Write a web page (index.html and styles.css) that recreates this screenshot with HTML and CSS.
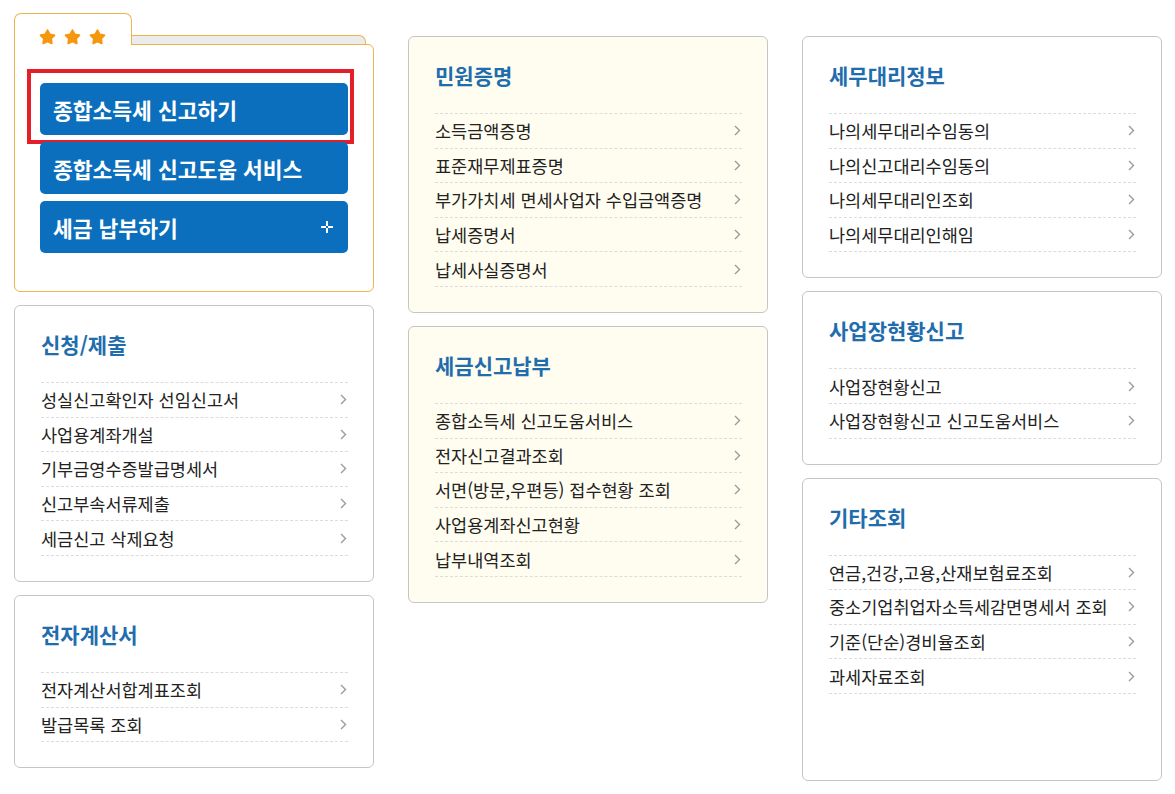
FILE: index.html
```html
<!DOCTYPE html>
<html lang="ko">
<head>
    <meta charset="UTF-8">
    <meta name="viewport" content="width=device-width, initial-scale=1.0">
    <title>종합소득세 - 메뉴</title>
    <link rel="stylesheet" href="styles.css">
</head>
<body>
    <div class="menu-board">
        <!-- 1열 -->
        <div class="col">
            <div class="fav">
                <div class="fav-head">
                    <div class="fav-tab">
                        <svg class="star" viewBox="0 0 15 15"><polygon points="7.5,1.2 9.44,4.83 13.49,5.55 10.64,8.52 11.2,12.6 7.5,10.8 3.8,12.6 4.36,8.52 1.51,5.55 5.56,4.83"/></svg>
                        <svg class="star" viewBox="0 0 15 15"><polygon points="7.5,1.2 9.44,4.83 13.49,5.55 10.64,8.52 11.2,12.6 7.5,10.8 3.8,12.6 4.36,8.52 1.51,5.55 5.56,4.83"/></svg>
                        <svg class="star" viewBox="0 0 15 15"><polygon points="7.5,1.2 9.44,4.83 13.49,5.55 10.64,8.52 11.2,12.6 7.5,10.8 3.8,12.6 4.36,8.52 1.51,5.55 5.56,4.83"/></svg>
                    </div>
                    <div class="fav-strip"></div>
                </div>
                <div class="fav-body">
                    <a href="#" class="big-btn">종합소득세 신고하기<span class="marker"></span></a>
                    <a href="#" class="big-btn">종합소득세 신고도움 서비스</a>
                    <a href="#" class="big-btn">세금 납부하기
                        <svg class="plus" viewBox="0 0 12 12"><path d="M6 0v5M6 7v5M0 6h5M7 6h5"/></svg>
                    </a>
                </div>
            </div>

            <div class="card">
                <h3 class="card-title">신청/제출</h3>
                <ul class="menu">
                    <li><a href="#">성실신고확인자 선임신고서<svg class="arr" viewBox="0 0 7 11"><path d="M1 1l4.5 4.5L1 10"/></svg></a></li>
                    <li><a href="#">사업용계좌개설<svg class="arr" viewBox="0 0 7 11"><path d="M1 1l4.5 4.5L1 10"/></svg></a></li>
                    <li><a href="#">기부금영수증발급명세서<svg class="arr" viewBox="0 0 7 11"><path d="M1 1l4.5 4.5L1 10"/></svg></a></li>
                    <li><a href="#">신고부속서류제출<svg class="arr" viewBox="0 0 7 11"><path d="M1 1l4.5 4.5L1 10"/></svg></a></li>
                    <li><a href="#">세금신고 삭제요청<svg class="arr" viewBox="0 0 7 11"><path d="M1 1l4.5 4.5L1 10"/></svg></a></li>
                </ul>
            </div>

            <div class="card">
                <h3 class="card-title">전자계산서</h3>
                <ul class="menu">
                    <li><a href="#">전자계산서합계표조회<svg class="arr" viewBox="0 0 7 11"><path d="M1 1l4.5 4.5L1 10"/></svg></a></li>
                    <li><a href="#">발급목록 조회<svg class="arr" viewBox="0 0 7 11"><path d="M1 1l4.5 4.5L1 10"/></svg></a></li>
                </ul>
            </div>
        </div>

        <!-- 2열 -->
        <div class="col col-low">
            <div class="card card-cream">
                <h3 class="card-title">민원증명</h3>
                <ul class="menu">
                    <li><a href="#">소득금액증명<svg class="arr" viewBox="0 0 7 11"><path d="M1 1l4.5 4.5L1 10"/></svg></a></li>
                    <li><a href="#">표준재무제표증명<svg class="arr" viewBox="0 0 7 11"><path d="M1 1l4.5 4.5L1 10"/></svg></a></li>
                    <li><a href="#">부가가치세 면세사업자 수입금액증명<svg class="arr" viewBox="0 0 7 11"><path d="M1 1l4.5 4.5L1 10"/></svg></a></li>
                    <li><a href="#">납세증명서<svg class="arr" viewBox="0 0 7 11"><path d="M1 1l4.5 4.5L1 10"/></svg></a></li>
                    <li><a href="#">납세사실증명서<svg class="arr" viewBox="0 0 7 11"><path d="M1 1l4.5 4.5L1 10"/></svg></a></li>
                </ul>
            </div>

            <div class="card card-cream">
                <h3 class="card-title">세금신고납부</h3>
                <ul class="menu">
                    <li><a href="#">종합소득세 신고도움서비스<svg class="arr" viewBox="0 0 7 11"><path d="M1 1l4.5 4.5L1 10"/></svg></a></li>
                    <li><a href="#">전자신고결과조회<svg class="arr" viewBox="0 0 7 11"><path d="M1 1l4.5 4.5L1 10"/></svg></a></li>
                    <li><a href="#">서면(방문,우편등) 접수현황 조회<svg class="arr" viewBox="0 0 7 11"><path d="M1 1l4.5 4.5L1 10"/></svg></a></li>
                    <li><a href="#">사업용계좌신고현황<svg class="arr" viewBox="0 0 7 11"><path d="M1 1l4.5 4.5L1 10"/></svg></a></li>
                    <li><a href="#">납부내역조회<svg class="arr" viewBox="0 0 7 11"><path d="M1 1l4.5 4.5L1 10"/></svg></a></li>
                </ul>
            </div>
        </div>

        <!-- 3열 -->
        <div class="col col-low">
            <div class="card">
                <h3 class="card-title">세무대리정보</h3>
                <ul class="menu">
                    <li><a href="#">나의세무대리수임동의<svg class="arr" viewBox="0 0 7 11"><path d="M1 1l4.5 4.5L1 10"/></svg></a></li>
                    <li><a href="#">나의신고대리수임동의<svg class="arr" viewBox="0 0 7 11"><path d="M1 1l4.5 4.5L1 10"/></svg></a></li>
                    <li><a href="#">나의세무대리인조회<svg class="arr" viewBox="0 0 7 11"><path d="M1 1l4.5 4.5L1 10"/></svg></a></li>
                    <li><a href="#">나의세무대리인해임<svg class="arr" viewBox="0 0 7 11"><path d="M1 1l4.5 4.5L1 10"/></svg></a></li>
                </ul>
            </div>

            <div class="card">
                <h3 class="card-title">사업장현황신고</h3>
                <ul class="menu">
                    <li><a href="#">사업장현황신고<svg class="arr" viewBox="0 0 7 11"><path d="M1 1l4.5 4.5L1 10"/></svg></a></li>
                    <li><a href="#">사업장현황신고 신고도움서비스<svg class="arr" viewBox="0 0 7 11"><path d="M1 1l4.5 4.5L1 10"/></svg></a></li>
                </ul>
            </div>

            <div class="card card-tall">
                <h3 class="card-title">기타조회</h3>
                <ul class="menu">
                    <li><a href="#">연금,건강,고용,산재보험료조회<svg class="arr" viewBox="0 0 7 11"><path d="M1 1l4.5 4.5L1 10"/></svg></a></li>
                    <li><a href="#">중소기업취업자소득세감면명세서 조회<svg class="arr" viewBox="0 0 7 11"><path d="M1 1l4.5 4.5L1 10"/></svg></a></li>
                    <li><a href="#">기준(단순)경비율조회<svg class="arr" viewBox="0 0 7 11"><path d="M1 1l4.5 4.5L1 10"/></svg></a></li>
                    <li><a href="#">과세자료조회<svg class="arr" viewBox="0 0 7 11"><path d="M1 1l4.5 4.5L1 10"/></svg></a></li>
                </ul>
            </div>
        </div>
    </div>
</body>
</html>
```

FILE: styles.css
```css
/* 종합소득세 메뉴 보드 */
body {
    margin: 0;
    padding: 0;
    background-color: #ffffff;
    font-family: "Noto Sans CJK KR", "Liberation Sans", sans-serif;
    color: #222;
}

a {
    text-decoration: none;
}

.menu-board {
    display: flex;
    align-items: flex-start;
    gap: 34px;
    padding: 13px 0 0 14px;
}

.col {
    width: 360px;
    display: flex;
    flex-direction: column;
    gap: 13px;
}

.col-low {
    margin-top: 23px;
}

/* 즐겨찾기 폴더 */
.fav-head {
    display: flex;
    align-items: flex-end;
}

.fav-tab {
    position: relative;
    z-index: 1;
    width: 118px;
    height: 32px;
    margin-bottom: -1px;
    box-sizing: border-box;
    padding: 15px 0 0 24px;
    display: flex;
    gap: 8px;
    background-color: #fff;
    border: 1px solid #eeb44c;
    border-bottom: 0;
    border-radius: 7px 7px 0 0;
}

.star {
    width: 17px;
    height: 17px;
    overflow: visible;
    fill: #f5980f;
    stroke: #f5980f;
    stroke-width: 1.8;
    stroke-linejoin: round;
}

.fav-strip {
    flex: 1;
    height: 9px;
    box-sizing: border-box;
    margin-right: 8px;
    background-color: #ececec;
    border: 1px solid #eeb44c;
    border-bottom: 0;
    border-left: 0;
    border-radius: 0 7px 0 0;
}

.fav-body {
    border: 1px solid #eeb44c;
    border-radius: 0 6px 6px 6px;
    padding: 38px 25px 38px 25px;
    display: flex;
    flex-direction: column;
    gap: 7px;
}

.big-btn {
    position: relative;
    display: flex;
    align-items: center;
    justify-content: space-between;
    height: 52px;
    padding: 0 15px 0 13px;
    border-radius: 5px;
    background-color: #0b6fbd;
    color: #fff;
    font-size: 21.5px;
    font-weight: bold;
}

.marker {
    position: absolute;
    top: -14px;
    left: -13px;
    right: -6px;
    bottom: -9px;
    border: 4px solid #e3202a;
    pointer-events: none;
}

.plus {
    width: 12px;
    height: 12px;
    stroke: #fff;
    stroke-width: 2;
    fill: none;
}

/* 메뉴 카드 */
.card {
    border: 1px solid #c5c5c5;
    border-radius: 6px;
    padding: 24px 25px 25px 26px;
    background-color: #fff;
}

.card-cream {
    background-color: #fffdf0;
}

.card-tall {
    box-sizing: border-box;
    min-height: 303px;
}

.card-title {
    margin: 0 0 24px;
    font-size: 21px;
    line-height: 28px;
    font-weight: bold;
    color: #1f6dad;
}

.menu {
    list-style: none;
    margin: 0;
    padding: 0;
    border-top: 1px dashed #dcdcdc;
}

.menu li {
    border-bottom: 1px dashed #dcdcdc;
}

.menu a {
    display: flex;
    align-items: center;
    justify-content: space-between;
    height: 33.6px;
    font-size: 17.5px;
    color: #222;
}

.arr {
    width: 7px;
    height: 11px;
    margin-right: 1px;
    fill: none;
    stroke: #9a9a9a;
    stroke-width: 1.4;
}
```
